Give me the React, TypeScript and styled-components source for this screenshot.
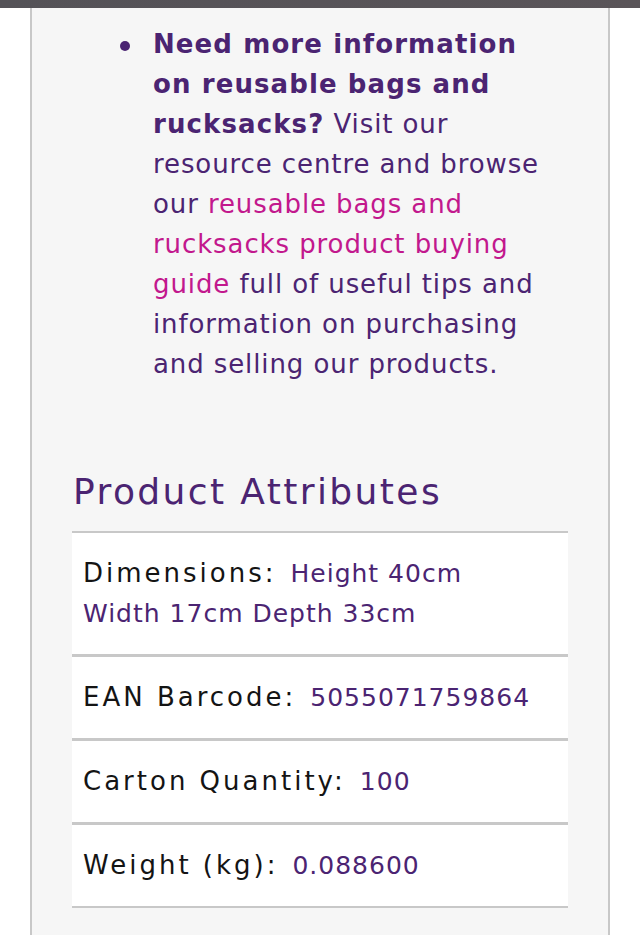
import * as React from 'react'
import styled, { createGlobalStyle } from 'styled-components'

const purple = '#4b2472'
const magenta = '#c2188d'
const line = '#c8c8c8'

const GlobalStyle = createGlobalStyle`
  html, body {
    margin: 0;
    padding: 0;
    background: #ffffff;
  }
  body {
    font-family: 'DejaVu Sans', 'Open Sans', sans-serif;
    -webkit-font-smoothing: antialiased;
  }
`

const TopBar = styled.div`
  height: 8px;
  background: linear-gradient(90deg, #545257, #5a5559);
`

const Panel = styled.div`
  margin: 0 30px;
  min-height: 927px;
  box-sizing: border-box;
  background: #f6f6f6;
  border-left: 2px solid ${line};
  border-right: 2px solid ${line};
  padding: 16px 40px 40px;
`

const InfoList = styled.ul`
  margin: 0;
  padding: 0 15px 0 81px;
  list-style: none;
  color: ${purple};
  font-size: 26px;
  line-height: 40px;
  letter-spacing: 0.9px;
`

const InfoItem = styled.li`
  position: relative;

  &::before {
    content: '';
    position: absolute;
    left: -33px;
    top: 17px;
    width: 10px;
    height: 10px;
    border-radius: 50%;
    background: ${purple};
  }
`

const Strong = styled.strong`
  font-weight: 700;
  letter-spacing: 1.1px;
`

const Link = styled.a`
  color: ${magenta};
  text-decoration: none;
`

const Heading = styled.h2`
  margin: 86px 0 17px 1px;
  font-size: 36px;
  line-height: 44px;
  font-weight: 400;
  letter-spacing: 2.4px;
  color: ${purple};
`

const Table = styled.div`
  background: #ffffff;
  border-top: 2px solid ${line};
`

const Row = styled.div<{ $last?: boolean }>`
  padding: 20px 24px 20px 11px;
  border-bottom: ${({ $last }) => ($last ? 2 : 3)}px solid ${line};
  font-size: 25px;
  line-height: 40px;
`

const Label = styled.span`
  color: #141414;
  font-size: 26px;
  letter-spacing: 3px;
  margin-right: 14px;
`

const Value = styled.span`
  color: ${purple};
  letter-spacing: 1px;
`

const attributes = [
  { label: 'Dimensions:', value: 'Height 40cm Width 17cm Depth 33cm' },
  { label: 'EAN Barcode:', value: '5055071759864' },
  { label: 'Carton Quantity:', value: '100' },
  { label: 'Weight (kg):', value: '0.088600' },
]

const App: React.FunctionComponent = () => {
  return (
    <>
      <GlobalStyle />
      <TopBar />
      <Panel>
        <InfoList>
          <InfoItem>
            <Strong>Need more information on reusable bags and rucksacks?</Strong> Visit our
            resource centre and browse our{' '}
            <Link href="#">reusable bags and rucksacks product buying guide</Link> full of
            useful tips and information on purchasing and selling our products.
          </InfoItem>
        </InfoList>
        <Heading>Product Attributes</Heading>
        <Table>
          {attributes.map((a, i) => (
            <Row key={a.label} $last={i === attributes.length - 1}>
              <Label>{a.label}</Label>
              <Value>{a.value}</Value>
            </Row>
          ))}
        </Table>
      </Panel>
    </>
  )
}

export default App
